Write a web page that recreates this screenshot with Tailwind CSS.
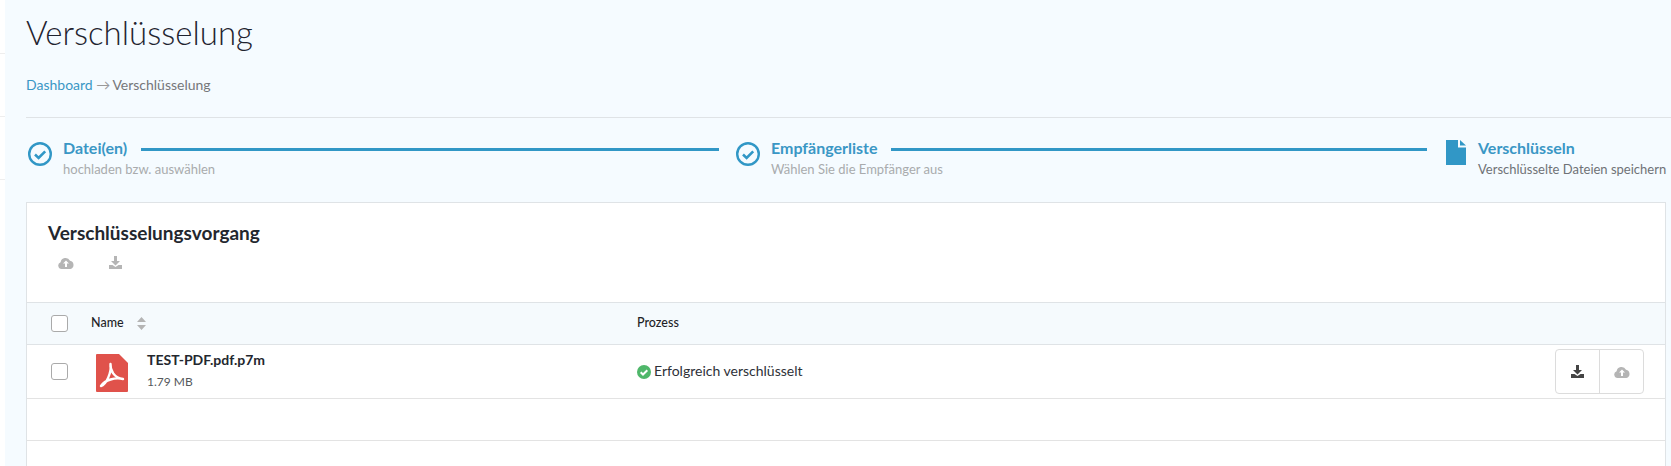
<!DOCTYPE html>
<html lang="de">
<head>
  <meta charset="UTF-8" />
  <title>Verschlüsselung</title>
  <script src="https://cdn.jsdelivr.net/npm/@tailwindcss/browser@4"></script>
</head>
<body class="bg-white font-['Lato','Noto_Sans',sans-serif] overflow-hidden">
  <div class="flex h-[466px] overflow-hidden">
    <!-- Sidebar sliver -->
    <aside class="w-[5px] shrink-0 bg-white">
      <div class="h-[54px] border-b border-[#eeeeee]"></div>
      <div class="h-[63px] border-b border-[#eeeeee]"></div>
      <div class="h-[63px] border-b border-[#eeeeee]"></div>
    </aside>

    <main class="flex-1 min-w-0 bg-[#f5fbff] pl-[21px] pr-[5px]">
      <!-- Header -->
      <h1 class="pt-[10px] h-[66px] text-[33px] leading-[44px] font-light text-[#1f2430]">Verschlüsselung</h1>
      <div class="h-[52px] -mr-[5px] border-b border-[#dfe3e6] pt-[10px] text-[14px] leading-[18px] text-[#76777a]">
        <a class="text-[#3a97c5]">Dashboard</a> <span class="text-[#999999] -mr-px">→</span> Verschlüsselung
      </div>

      <!-- Steps -->
      <div class="h-[84px] flex items-start pt-[21px]">
        <svg class="w-[26px] h-[26px] mt-[2px] ml-px shrink-0" viewBox="0 0 26 26" fill="none" stroke="#3197c6">
          <circle cx="13" cy="13" r="10.8" stroke-width="2.4"/>
          <path d="M8 13.5l3.6 3.4 6.6-6.6" stroke-width="2.6"/>
        </svg>
        <div class="ml-[10px] -mt-px w-[64px] shrink-0 whitespace-nowrap">
          <div class="text-[16px] leading-[20px] font-bold text-[#3a97c5]">Datei(en)</div>
          <div class="text-[13px] leading-[16px] mt-[3px] text-[#a9abad]">hochladen bzw. auswählen</div>
        </div>
        <div class="w-[578px] shrink-0 h-[3px] mt-[9px] ml-[14px] mr-[16px] bg-[#3197c6]"></div>
        <svg class="w-[26px] h-[26px] mt-[2px] shrink-0" viewBox="0 0 26 26" fill="none" stroke="#3197c6">
          <circle cx="13" cy="13" r="10.8" stroke-width="2.4"/>
          <path d="M8 13.5l3.6 3.4 6.6-6.6" stroke-width="2.6"/>
        </svg>
        <div class="ml-[10px] -mt-px w-[106px] shrink-0 whitespace-nowrap">
          <div class="text-[16px] leading-[20px] font-bold text-[#3a97c5]">Empfängerliste</div>
          <div class="text-[13px] leading-[16px] mt-[3px] text-[#a9abad]">Wählen Sie die Empfänger aus</div>
        </div>
        <div class="w-[536px] shrink-0 h-[3px] mt-[9px] ml-[14px] mr-[19px] bg-[#3197c6]"></div>
        <svg class="w-[20px] h-[25px] mt-[1px] shrink-0" viewBox="0 0 20 25">
          <path d="M0 0h12v7.5h8V25H0z" fill="#3197c6"/>
          <path d="M14 0l6 5.5h-6z" fill="#3197c6"/>
        </svg>
        <div class="ml-[12px] -mt-px whitespace-nowrap">
          <div class="text-[16px] leading-[20px] font-bold text-[#3a97c5]">Verschlüsseln</div>
          <div class="text-[13px] leading-[16px] mt-[3px] text-[#6f7276]">Verschlüsselte Dateien speichern</div>
        </div>
      </div>

      <!-- Card -->
      <section class="h-[400px] bg-white border border-[#dfe3e6]">
        <div class="h-[99px] pl-[21px] pt-[18px]">
          <h2 class="text-[19px] leading-[24px] font-bold text-[#23272e]">Verschlüsselungsvorgang</h2>
          <div class="flex items-center mt-[11px] pl-[10px] gap-[35px]">
            <svg class="w-[16px] h-[12px]" viewBox="0 0 16 12">
              <path d="M3.6 12A3.5 3.5 0 0 1 2.6 5.2 5 5 0 0 1 12 3.8 4.2 4.2 0 0 1 12.4 12z" fill="#b5b5b5"/>
              <path d="M8 3.4l3 3H9V10H7V6.4H5z" fill="#fff"/>
            </svg>
            <svg class="w-[13px] h-[13px]" viewBox="0 0 13 13">
              <path d="M5 0h3v5h3L6.500 9.500 2 5h3z" fill="#b5b5b5"/>
              <path d="M0 9h3.500l3 2 3-2H13v4H0z" fill="#b5b5b5"/>
            </svg>
          </div>
        </div>

        <!-- Table header -->
        <div class="h-[43px] flex items-center bg-[#f5fafd] border-y border-[#dfe3e6]">
          <div class="w-[24px] shrink-0"></div>
          <span class="w-[17px] h-[17px] shrink-0 bg-white border border-[#aaaaaa] rounded-[3px]"></span>
          <div class="w-[569px] shrink-0 flex items-center pl-[23px]">
            <span class="text-[12.5px] font-medium text-[#1f1f28]">Name</span>
            <svg class="w-[9px] h-[13px] ml-[13px]" viewBox="0 0 9 13" fill="#b4b4b4">
              <path d="M4.500 0L9 5H0zM4.500 13L0 8h9z"/>
            </svg>
          </div>
          <span class="text-[12.5px] font-medium text-[#1f1f28]">Prozess</span>
        </div>

        <!-- File row -->
        <div class="h-[54px] flex items-center border-b border-[#e3e3e3] relative">
          <div class="w-[24px] shrink-0"></div>
          <span class="w-[17px] h-[17px] shrink-0 bg-white border border-[#aaaaaa] rounded-[3px]"></span>
          <svg class="w-[32px] h-[38px] ml-[28px] mt-[2px] shrink-0" viewBox="0 0 32 38">
            <path d="M1 0h22l9 9v28a1 1 0 0 1-1 1H1a1 1 0 0 1-1-1V1a1 1 0 0 1 1-1z" fill="#e0524b"/>
            <path d="M14.500 10C14 16 18 24 27 25C19 23 9 26 5 32C10 31 16 18 14.500 10z" fill="none" stroke="#fff" stroke-width="2.400" stroke-linejoin="round"/>
          </svg>
          <div class="w-[509px] shrink-0 pl-[19px] -mt-[3px]">
            <div class="text-[14px] leading-[18px] font-bold text-[#23272e]">TEST-PDF.pdf.p7m</div>
            <div class="text-[12px] leading-[16px] mt-[5px] text-[#55585c]">1.79 MB</div>
          </div>
          <svg class="w-[14px] h-[14px] shrink-0" viewBox="0 0 14 14">
            <circle cx="7" cy="7" r="7" fill="#4fb76a"/>
            <path d="M3.700 7.200l2.300 2.300 4.300-4.300" fill="none" stroke="#fff" stroke-width="2"/>
          </svg>
          <span class="ml-[3px] mb-[2px] text-[14px] text-[#2e3138]">Erfolgreich verschlüsselt</span>
          <div class="ml-auto mr-[21px] flex h-[45px] w-[89px] border border-[#dcdcdc] rounded-[4px]">
            <button class="w-[44px] flex items-center justify-center border-r border-[#dcdcdc]">
              <svg class="w-[13px] h-[13px]" viewBox="0 0 13 13">
                <path d="M5 0h3v5h3L6.500 9.500 2 5h3z" fill="#444"/>
                <path d="M0 9h3.500l3 2 3-2H13v4H0z" fill="#444"/>
              </svg>
            </button>
            <button class="flex-1 flex items-center justify-center">
              <svg class="w-[16px] h-[12px]" viewBox="0 0 16 12">
                <path d="M3.600 12A3.500 3.500 0 0 1 2.600 5.200 5 5 0 0 1 12 3.800 4.200 4.200 0 0 1 12.400 12z" fill="#b5b5b5"/>
                <path d="M8 3.400l3 3H9V10H7V6.400H5z" fill="#fff"/>
              </svg>
            </button>
          </div>
        </div>

        <!-- Empty row -->
        <div class="h-[42px] border-b border-[#e3e3e3]"></div>
      </section>
    </main>
  </div>
</body>
</html>
